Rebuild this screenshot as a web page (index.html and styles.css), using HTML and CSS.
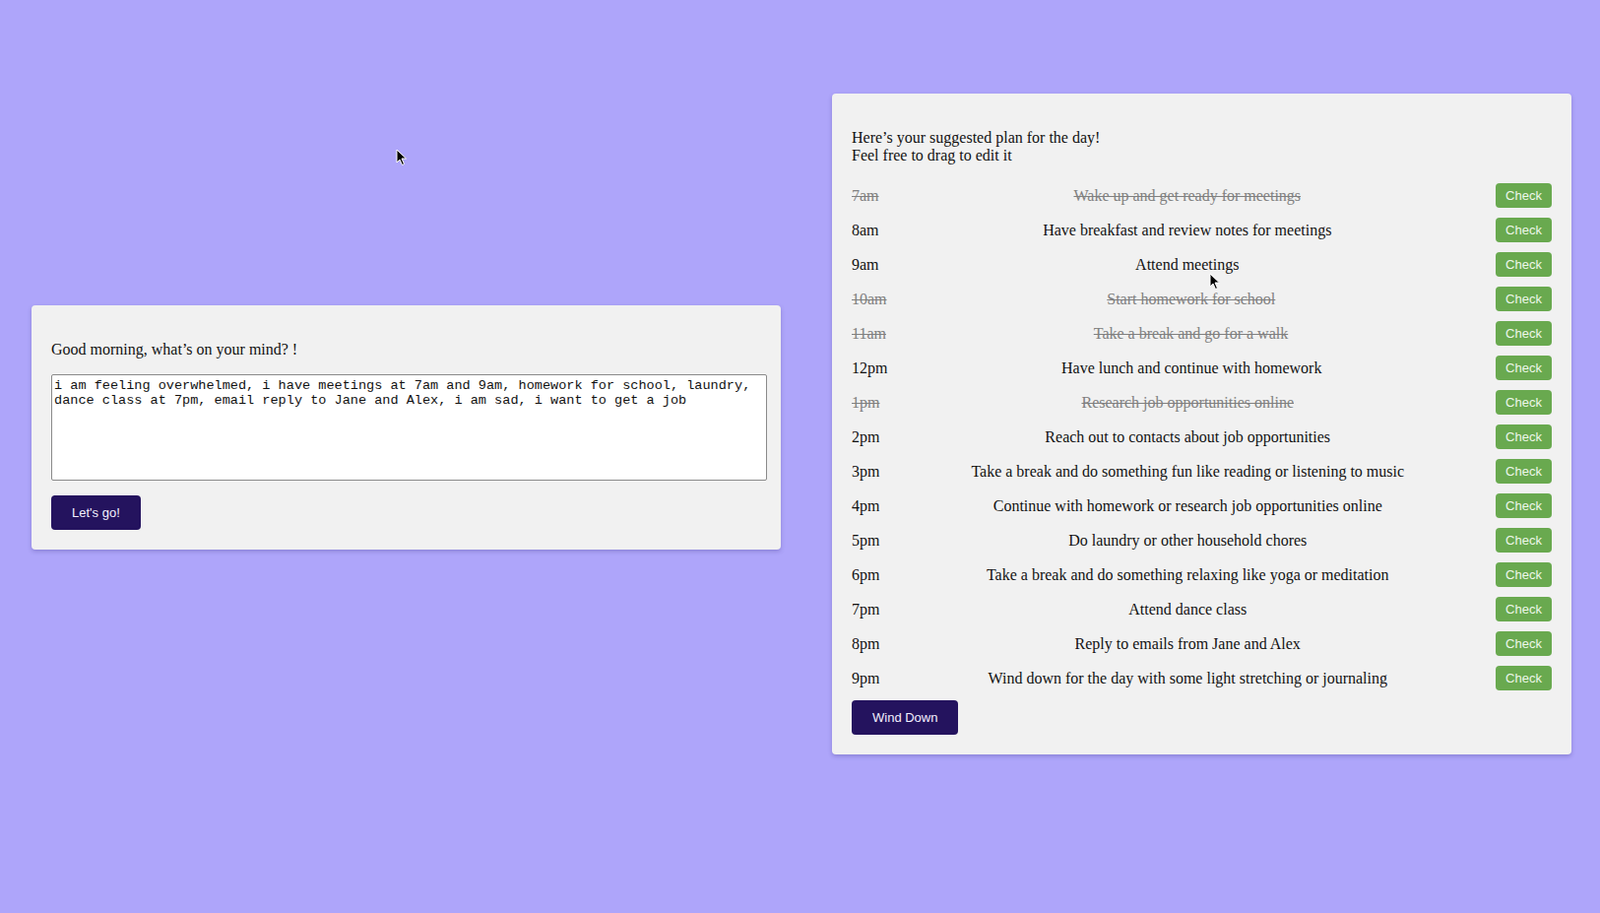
FILE: index.html
```html
<!DOCTYPE html>
<html lang="en">
<head>
<meta charset="utf-8">
<title>Daily Planner</title>
<link rel="stylesheet" href="styles.css">
</head>
<body>
<main class="page">
  <section class="card card-input">
    <p class="prompt">Good morning, what’s on your mind? !</p>
    <textarea class="mind">i am feeling overwhelmed, i have meetings at 7am and 9am, homework for school, laundry, dance class at 7pm, email reply to Jane and Alex, i am sad, i want to get a job</textarea>
    <button class="btn-dark">Let's go!</button>
  </section>

  <section class="card card-plan">
    <p class="plan-head">Here’s your suggested plan for the day!<br>Feel free to drag to edit it</p>
    <div class="rows">
      <div class="row done"><span class="time">7am</span><span class="task">Wake up and get ready for meetings</span><button class="btn-check">Check</button></div>
      <div class="row"><span class="time">8am</span><span class="task">Have breakfast and review notes for meetings</span><button class="btn-check">Check</button></div>
      <div class="row"><span class="time">9am</span><span class="task">Attend meetings</span><button class="btn-check">Check</button></div>
      <div class="row done"><span class="time">10am</span><span class="task">Start homework for school</span><button class="btn-check">Check</button></div>
      <div class="row done"><span class="time">11am</span><span class="task">Take a break and go for a walk</span><button class="btn-check">Check</button></div>
      <div class="row"><span class="time">12pm</span><span class="task">Have lunch and continue with homework</span><button class="btn-check">Check</button></div>
      <div class="row done"><span class="time">1pm</span><span class="task">Research job opportunities online</span><button class="btn-check">Check</button></div>
      <div class="row"><span class="time">2pm</span><span class="task">Reach out to contacts about job opportunities</span><button class="btn-check">Check</button></div>
      <div class="row"><span class="time">3pm</span><span class="task">Take a break and do something fun like reading or listening to music</span><button class="btn-check">Check</button></div>
      <div class="row"><span class="time">4pm</span><span class="task">Continue with homework or research job opportunities online</span><button class="btn-check">Check</button></div>
      <div class="row"><span class="time">5pm</span><span class="task">Do laundry or other household chores</span><button class="btn-check">Check</button></div>
      <div class="row"><span class="time">6pm</span><span class="task">Take a break and do something relaxing like yoga or meditation</span><button class="btn-check">Check</button></div>
      <div class="row"><span class="time">7pm</span><span class="task">Attend dance class</span><button class="btn-check">Check</button></div>
      <div class="row"><span class="time">8pm</span><span class="task">Reply to emails from Jane and Alex</span><button class="btn-check">Check</button></div>
      <div class="row"><span class="time">9pm</span><span class="task">Wind down for the day with some light stretching or journaling</span><button class="btn-check">Check</button></div>
    </div>
    <button class="btn-dark btn-wind">Wind Down</button>
  </section>

  <svg class="cursor cursor-a" width="12" height="18" viewBox="0 0 12 18"><path d="M1 1 L1 14 L4 11 L6.5 16.5 L8.5 15.5 L6 10 L10.5 10 Z" fill="#000" stroke="#fff" stroke-width="1"/></svg>
  <svg class="cursor cursor-b" width="12" height="18" viewBox="0 0 12 18"><path d="M1 1 L1 14 L4 11 L6.5 16.5 L8.5 15.5 L6 10 L10.5 10 Z" fill="#000" stroke="#fff" stroke-width="1"/></svg>
</main>
</body>
</html>
```

FILE: styles.css
```css
html, body {
  margin: 0;
  padding: 0;
}

body {
  background: #aea5fa;
  font-family: "Liberation Serif", "Times New Roman", serif;
  font-size: 16px;
  color: #111;
  min-height: 927px;
}

.page {
  position: relative;
  display: flex;
  align-items: center;
  gap: 52px;
  padding: 95px 29px 0 32px;
}

.card {
  box-sizing: border-box;
  background: #f1f1f1;
  border-radius: 4px;
  padding: 20px;
  box-shadow: 0 2px 4px rgba(40, 30, 110, 0.25);
}

.card-input {
  width: 761px;
  align-self: flex-start;
  margin-top: 215px;
}

.card-plan {
  width: 751px;
}

.prompt {
  margin: 16px 0;
}

.mind {
  display: block;
  box-sizing: border-box;
  width: 727px;
  height: 108px;
  margin: 0;
  padding: 3px 2px 2px;
  border: 1px solid #8a8a8a;
  border-radius: 2px;
  background: #fff;
  font-family: "Liberation Mono", "Courier New", monospace;
  font-size: 13.55px;
  line-height: 15.4px;
  color: #111;
  resize: none;
}

.btn-dark {
  display: block;
  height: 35px;
  padding: 0 21px;
  margin-top: 15px;
  border: none;
  border-radius: 4px;
  background: #24135e;
  color: #f3f0ff;
  font-family: "Liberation Sans", Arial, sans-serif;
  font-size: 13px;
}

.btn-wind {
  margin-top: 5px;
}

.plan-head {
  margin: 16px 0 14px;
}

.row {
  display: flex;
  justify-content: space-between;
  align-items: center;
  padding: 5px 0;
}

.time,
.task {
  line-height: 18px;
}

.task {
  text-align: center;
}

.done .time,
.done .task {
  color: #808080;
  text-decoration: line-through;
}

.btn-check {
  height: 25px;
  width: 57px;
  padding: 0;
  border: none;
  border-radius: 4px;
  background: #69a94f;
  color: #eef7ea;
  font-family: "Liberation Sans", Arial, sans-serif;
  font-size: 13px;
}

.cursor {
  position: absolute;
}

.cursor-a {
  left: 402px;
  top: 151px;
}

.cursor-b {
  left: 1228px;
  top: 277px;
}
```
